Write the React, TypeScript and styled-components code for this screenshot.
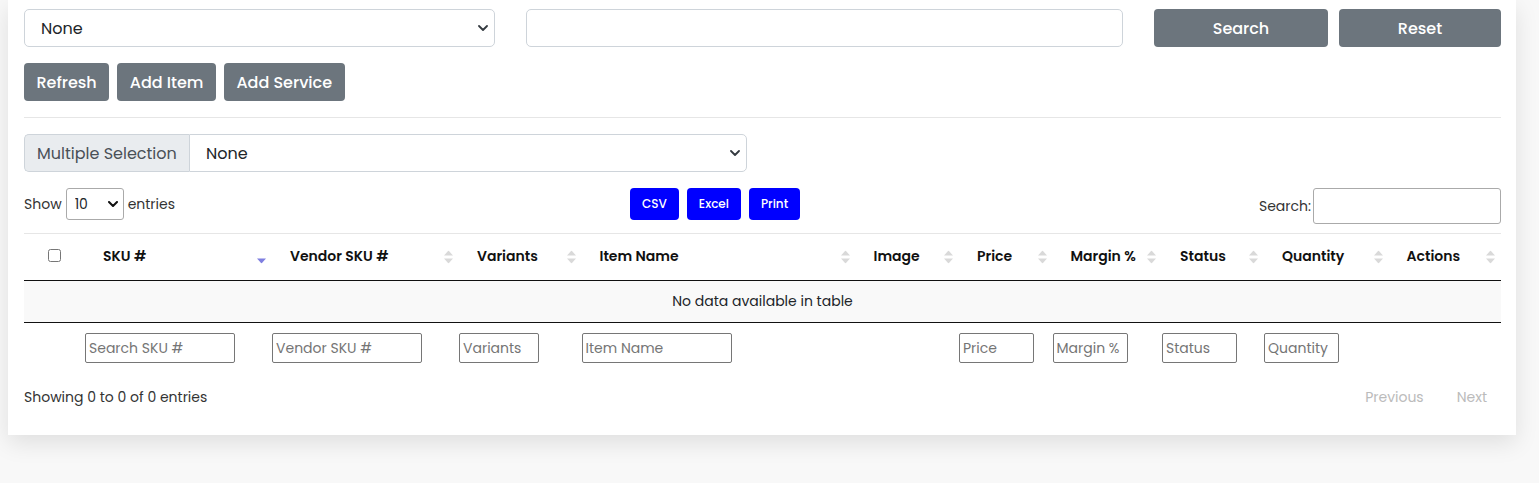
import React from "react";
import styled, { createGlobalStyle } from "styled-components";

const FONT = `Poppins, Inter, "Noto Sans", Arial, sans-serif`;

const GlobalStyle = createGlobalStyle`
  html, body {
    margin: 0;
    padding: 0;
    background: #f8f8f8;
    font-family: ${FONT};
    color: #212529;
  }
  * {
    box-sizing: border-box;
  }
`;

const Page = styled.div`
  padding: 0 23px 49px 8px;
`;

const Card = styled.div`
  background: #fff;
  padding: 9px 15px 23px 16px;
  box-shadow: 0 8px 22px rgba(0, 0, 0, 0.1);
`;

const TopRow = styled.div`
  display: grid;
  grid-template-columns: 471px 597px 1fr;
  column-gap: 31px;
`;

const ButtonPair = styled.div`
  display: grid;
  grid-template-columns: 174px 1fr;
  column-gap: 11px;
`;

const GreyButton = styled.button`
  height: 38px;
  padding: 0 12.5px;
  border: none;
  border-radius: 4px;
  background: #6c757d;
  color: #fff;
  font-family: ${FONT};
  font-size: 16px;
  font-weight: 500;
  cursor: pointer;
`;

const ActionRow = styled.div`
  display: flex;
  gap: 8px;
  margin-top: 16px;
`;

const Divider = styled.hr`
  margin: 16px 0 0;
  border: none;
  border-top: 1px solid #e6e6e6;
`;

const SelectWrap = styled.div<{ $small?: boolean }>`
  position: relative;
  display: flex;
  flex: 1;
  svg {
    position: absolute;
    right: ${(p) => (p.$small ? "6px" : "7px")};
    top: 50%;
    transform: translateY(-50%);
    pointer-events: none;
  }
`;

const Select = styled.select<{ $small?: boolean }>`
  appearance: none;
  width: 100%;
  height: ${(p) => (p.$small ? "32px" : "38px")};
  padding: ${(p) => (p.$small ? "0 20px 0 8px" : "0 36px 0 16px")};
  border: 1px solid ${(p) => (p.$small ? "#aaa" : "#ced4da")};
  border-radius: ${(p) => (p.$small ? "3px" : "5px")};
  background: #fff;
  color: #212529;
  font-family: ${FONT};
  font-size: ${(p) => (p.$small ? "14px" : "16px")};
  outline: none;
`;

const TextInput = styled.input`
  width: 100%;
  height: 38px;
  padding: 0 12px;
  border: 1px solid #ced4da;
  border-radius: 5px;
  font-family: ${FONT};
  font-size: 16px;
  outline: none;
`;

const GroupRow = styled.div`
  display: flex;
  width: 723px;
  margin-top: 16px;
`;

const GroupLabel = styled.span`
  display: flex;
  align-items: center;
  width: 165px;
  height: 38px;
  padding: 0 12px;
  background: #e9ecef;
  border: 1px solid #ced4da;
  border-right: none;
  border-radius: 5px 0 0 5px;
  color: #495057;
  font-size: 16px;
  white-space: nowrap;
`;

const GroupSelect = styled(Select)`
  border-radius: 0 5px 5px 0;
`;

const ControlsRow = styled.div`
  display: grid;
  grid-template-columns: 606px auto 1fr;
  align-items: start;
  margin-top: 16px;
`;

const LengthControl = styled.label`
  display: flex;
  align-items: center;
  gap: 4px;
  height: 32px;
  font-size: 14px;
  color: #333;
`;

const LengthSelectBox = styled.div`
  display: flex;
  width: 58px;
`;

const ExportButtons = styled.div`
  display: flex;
  gap: 8px;
`;

const BlueButton = styled.button`
  height: 32px;
  padding: 0 12px;
  border: none;
  border-radius: 4px;
  background: #0000ff;
  color: #fff;
  font-family: ${FONT};
  font-size: 12px;
  font-weight: 500;
  cursor: pointer;
`;

const SearchControl = styled.label`
  display: flex;
  justify-content: flex-end;
  align-items: center;
  gap: 2px;
  height: 36px;
  font-size: 14px;
  color: #333;
`;

const SearchBox = styled.input`
  width: 188px;
  height: 36px;
  border: 1px solid #aaa;
  border-radius: 3px;
  outline: none;
`;

const Table = styled.table`
  width: 100%;
  margin-top: 9px;
  table-layout: fixed;
  border-collapse: separate;
  border-spacing: 0;
  font-size: 14px;
`;

const HeadCell = styled.th<{ $first?: boolean }>`
  position: relative;
  height: 48px;
  padding: ${(p) => (p.$first ? "0" : "0 28px 2px 18px")};
  border-top: 1px solid #e6e6e6;
  border-bottom: 1px solid #111;
  text-align: ${(p) => (p.$first ? "center" : "left")};
  font-weight: 600;
  color: #111;
  white-space: nowrap;
  vertical-align: middle;
`;

const SortIcon = styled.svg`
  position: absolute;
  right: 6px;
  top: 50%;
  transform: translateY(-50%);
`;

const Check = styled.input`
  width: 13px;
  height: 13px;
  margin: 0 0 4px;
  vertical-align: middle;
`;

const EmptyCell = styled.td`
  height: 42px;
  padding: 0;
  background: #f9f9f9;
  border-bottom: 1px solid #111;
  text-align: center;
  color: #212529;
`;

const FilterCell = styled.td`
  padding: 10px 0;
`;

const FilterInput = styled.input<{ $w: number }>`
  display: block;
  width: ${(p) => p.$w}px;
  height: 30px;
  padding: 0 3px;
  border: 1px solid #767676;
  border-radius: 2px;
  font-family: ${FONT};
  font-size: 14px;
  outline: none;
  &::placeholder {
    color: #757575;
  }
`;

const InfoRow = styled.div`
  display: flex;
  justify-content: space-between;
  align-items: center;
  margin-top: 10px;
  font-size: 14px;
  color: #333;
`;

const Pager = styled.div`
  display: flex;
  gap: 5px;
`;

const PageButton = styled.span`
  padding: 4px 14px;
  color: #bbb;
`;

const Chevron = ({ small }: { small?: boolean }) => (
  <svg width="10" height="6" viewBox="0 0 10 6" fill="none">
    <path
      d="M1 1l4 4 4-4"
      stroke={small ? "#111" : "#343a40"}
      strokeWidth={small ? 2 : 1.8}
      strokeLinecap="round"
      strokeLinejoin="round"
    />
  </svg>
);

const Sort = ({ active }: { active?: boolean }) => (
  <SortIcon width="9" height="13" viewBox="0 0 9 13">
    {!active && <path d="M4.5 0L9 5H0z" fill="#d9d9d9" />}
    <path d="M0 8h9l-4.5 5z" fill={active ? "#7f7fe0" : "#d9d9d9"} />
  </SortIcon>
);

const columns = [
  { title: "SKU #", width: 187, filter: "Search SKU #", fw: 150, active: true },
  { title: "Vendor SKU #", width: 187, filter: "Vendor SKU #", fw: 150 },
  { title: "Variants", width: 122.5, filter: "Variants", fw: 80 },
  { title: "Item Name", width: 274, filter: "Item Name", fw: 150 },
  { title: "Image", width: 103.5 },
  { title: "Price", width: 93.5, filter: "Price", fw: 75 },
  { title: "Margin %", width: 109.5, filter: "Margin %", fw: 75 },
  { title: "Status", width: 102, filter: "Status", fw: 75 },
  { title: "Quantity", width: 124.5, filter: "Quantity", fw: 75 },
  { title: "Actions", width: 112.5 },
];

const App = () => {
  return (
    <Page>
      <GlobalStyle />
      <Card>
        <TopRow>
          <SelectWrap>
            <Select defaultValue="none">
              <option value="none">None</option>
            </Select>
            <Chevron />
          </SelectWrap>
          <TextInput />
          <ButtonPair>
            <GreyButton>Search</GreyButton>
            <GreyButton>Reset</GreyButton>
          </ButtonPair>
        </TopRow>

        <ActionRow>
          <GreyButton>Refresh</GreyButton>
          <GreyButton>Add Item</GreyButton>
          <GreyButton>Add Service</GreyButton>
        </ActionRow>

        <Divider />

        <GroupRow>
          <GroupLabel>Multiple Selection</GroupLabel>
          <SelectWrap>
            <GroupSelect defaultValue="none">
              <option value="none">None</option>
            </GroupSelect>
            <Chevron />
          </SelectWrap>
        </GroupRow>

        <ControlsRow>
          <LengthControl>
            Show
            <LengthSelectBox>
              <SelectWrap $small>
                <Select $small defaultValue="10">
                  <option value="10">10</option>
                  <option value="25">25</option>
                  <option value="50">50</option>
                </Select>
                <Chevron small />
              </SelectWrap>
            </LengthSelectBox>
            entries
          </LengthControl>
          <ExportButtons>
            <BlueButton>CSV</BlueButton>
            <BlueButton>Excel</BlueButton>
            <BlueButton>Print</BlueButton>
          </ExportButtons>
          <SearchControl>
            Search:
            <SearchBox />
          </SearchControl>
        </ControlsRow>

        <Table>
          <colgroup>
            <col style={{ width: 61 }} />
            {columns.map((c) => (
              <col key={c.title} style={{ width: c.width }} />
            ))}
          </colgroup>
          <thead>
            <tr>
              <HeadCell $first>
                <Check type="checkbox" />
              </HeadCell>
              {columns.map((c) => (
                <HeadCell key={c.title}>
                  {c.title}
                  <Sort active={c.active} />
                </HeadCell>
              ))}
            </tr>
          </thead>
          <tbody>
            <tr>
              <EmptyCell colSpan={11}>No data available in table</EmptyCell>
            </tr>
          </tbody>
          <tfoot>
            <tr>
              <FilterCell />
              {columns.map((c) => (
                <FilterCell key={c.title}>
                  {c.filter && <FilterInput $w={c.fw!} placeholder={c.filter} />}
                </FilterCell>
              ))}
            </tr>
          </tfoot>
        </Table>

        <InfoRow>
          <span>Showing 0 to 0 of 0 entries</span>
          <Pager>
            <PageButton>Previous</PageButton>
            <PageButton>Next</PageButton>
          </Pager>
        </InfoRow>
      </Card>
    </Page>
  );
};

export default App;
